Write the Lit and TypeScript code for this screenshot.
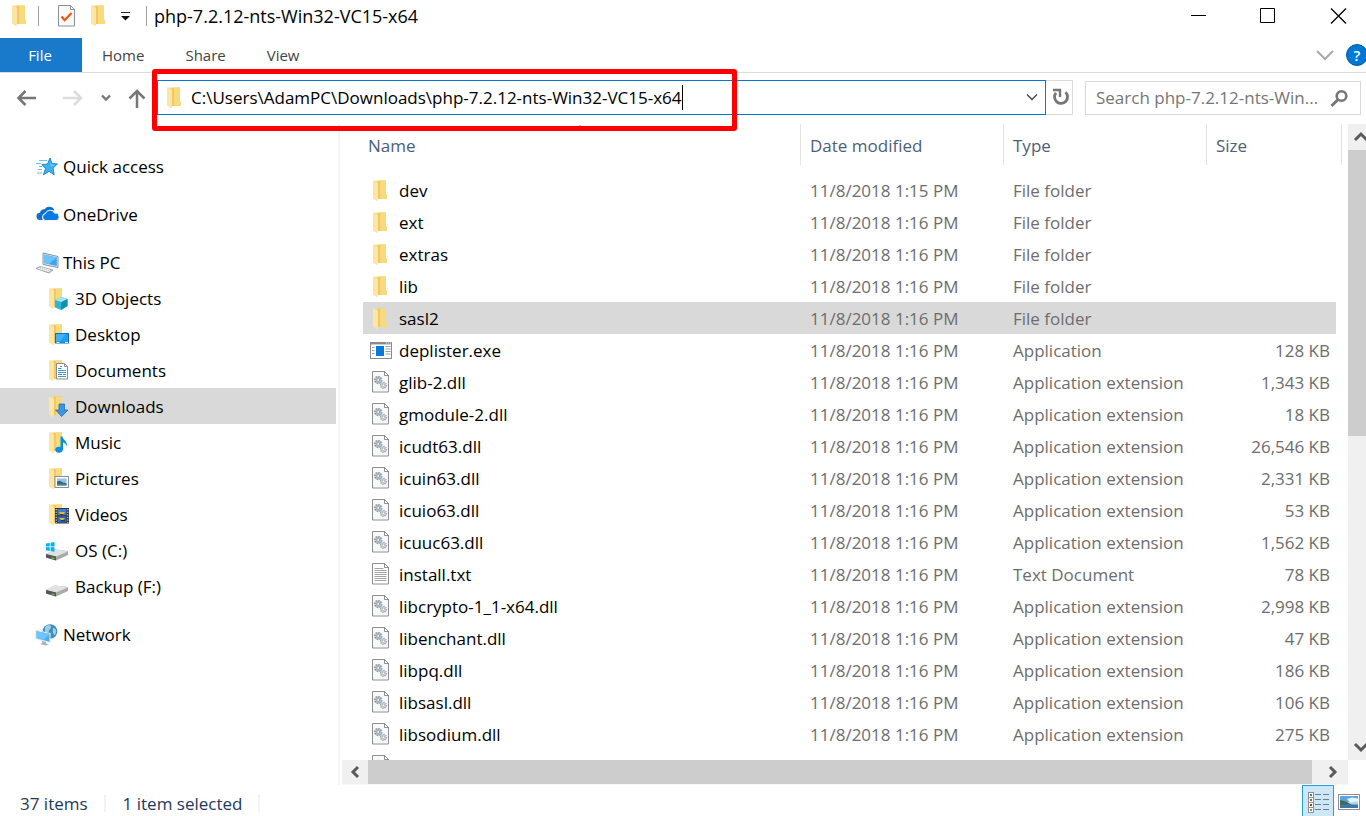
import { LitElement, html, svg, css, nothing } from "lit";
import { customElement, property, state } from "lit/decorators.js";
import { classMap } from "lit/directives/class-map.js";

const folderShape = svg`
  <path d="M5 0.5h9v14l1 .6V19H6z" fill="#f0c964"/>
  <path d="M8 0.5h6v14l1 .6V19H8z" fill="#f8da7e"/>
  <path d="M1 0.5h4.500v14.800L5.600 21 1 18.200z" fill="#f9dd8c"/>
  <path d="M1 0.5L6 3.200V16.500L5.200 21.200 1 18.600z" fill="#fde6a4"/>`;

const glyphs: Record<string, unknown> = {
  folder: svg`<g transform="translate(2 0)">${folderShape}</g>`,
  exe: svg`
    <rect x="0.5" y="2.5" width="21" height="16" fill="#fff" stroke="#858b90"/>
    <rect x="0" y="2" width="22" height="2.4" fill="#858b90"/>
    <path d="M16 3h1M18 3h1M20 3h1" stroke="#fff"/>
    <rect x="6" y="6" width="8" height="10" fill="#0a78d7"/>
    <path d="M2 7.5h2.5M2 10.5h2.5M2 13.5h2.5M15.500 6.500h5M15.500 9h5M15.500 11.500h5M15.500 14h5" stroke="#9a9a9a"/>`,
  dll: svg`
    <g transform="translate(0 -1)">
    <path d="M2.5 0.5h12l4 4v16.5h-16z" fill="#f8f9fa" stroke="#8f8f8f"/>
    <path d="M14.5 0.5v4h4z" fill="#fff" stroke="#8f8f8f"/>
    <circle cx="8.2" cy="9" r="3.4" fill="#c3ccd3" stroke="#93a0ab" stroke-width="1.8" stroke-dasharray="1.6 1"/>
    <circle cx="8.2" cy="9" r="1.5" fill="#f8f9fa" stroke="#7d8b97" stroke-width=".8"/>
    <circle cx="13.5" cy="14.3" r="2.9" fill="#d5dbe0" stroke="#9aa6b0" stroke-width="1.4" stroke-dasharray="1.3 .9"/>
    <circle cx="13.5" cy="14.3" r="1.2" fill="#fff" stroke="#93a0ab" stroke-width=".7"/>
    </g>`,
  txt: svg`
    <g transform="translate(0 -1)">
    <path d="M2.5 0.5h12l4 4v16.5h-16z" fill="#fff" stroke="#8f8f8f"/>
    <path d="M14.5 0.5v4h4z" fill="#fff" stroke="#8f8f8f"/>
    <path d="M4.5 5.5h9M4.5 7.5h12M4.5 9.5h12M4.5 11.5h12M4.5 13.5h12M4.5 15.5h12M4.5 17.5h12" stroke="#a3a3a3"/>
    </g>`,
  check: svg`
    <path d="M2.5 0.5h12l4 4v16.5h-16z" fill="#f9f9f9" stroke="#8f8f8f"/>
    <path d="M14.5 0.5v4h4z" fill="#fff" stroke="#8f8f8f"/>
    <path d="M5.5 11.5l3.2 3.7L15.5 8" fill="none" stroke="#e8590c" stroke-width="2.2"/>`,
  star: svg`
    <path d="M14 2l2 5.500 5.500.4-4.400 4.200 1 6.700-5-3.500-5.600 3.500 2-6.300-3.500-4 5.500-.5z" fill="#3fb0f0" stroke="#1382c8" stroke-width=".9"/>
    <path d="M13.500 4.500l1.500 4 4 .5-3.800 1.200z" fill="#8bd4fb"/>
    <path d="M3 4.500h8M0 7.500h5M3 10.500h3M2 13.500h4M1 17h5" stroke="#74bfee" stroke-width="1.1"/>`,
  cloud: svg`
    <g transform="translate(1 -1)">
    <path d="M5.8 17H3.2A3.6 3.6 0 0 1 3 9.8 4.4 4.4 0 0 1 7.600 6.200 5.600 5.600 0 0 1 17.500 7.400 6 6 0 0 0 12 9.500 5.400 5.400 0 0 0 5.800 17z" fill="#0f6fc9"/>
    <path d="M8.600 17.500a3.500 3.500 0 0 1-.2-6.900 5 5 0 0 1 9.300-.4 3.700 3.700 0 0 1 1.300 7.300z" fill="#0a7ae0" stroke="#fff" stroke-width=".9"/>
    </g>`,
  pc: svg`
    <path d="M7 1l15 3.500v11L7 12.500z" fill="#e4e8eb" stroke="#7f8a92" stroke-width=".9"/>
    <path d="M8.300 2.600l12.500 2.900v8.500L8.300 11.300z" fill="#3ca5ee"/>
    <path d="M8.300 2.600l12.500 2.900-8 6.600-4.500-.8z" fill="#70c3f8"/>
    <path d="M0 16.500l4-2 13 3.500-4 3z" fill="#d6d9dc" stroke="#8e969c" stroke-width=".8"/>
    <path d="M2.500 16.500l10 2.700M5 15.500l9 2.500" stroke="#fff" stroke-width=".8" stroke-dasharray="1.400 .8"/>`,
  cube: svg`${folderShape}
    <path d="M7 12l6.500-3 6 2v7l-6.500 4L7 19.500z" fill="#2fb4d4"/>
    <path d="M7 12l6.500-3 6 2-6 3z" fill="#a2e6f2"/>
    <path d="M13.500 14l6-3v7l-6.500 4z" fill="#128fb0"/>`,
  desktop: svg`${folderShape}
    <rect x="7.500" y="9.500" width="13" height="9.500" fill="#1c9ff4" stroke="#0b6fb8"/>
    <path d="M8 10h10l-6 7H8z" fill="#41b3fb"/>
    <path d="M8.500 18.500h3M17 18.500h3" stroke="#d8f0ff"/>`,
  document: svg`${folderShape}
    <path d="M8.500 3.500h8l3 3v12.500h-11z" fill="#fff" stroke="#8c8c8c"/>
    <path d="M16.500 3.500v3h3" fill="none" stroke="#8c8c8c"/>
    <path d="M10 8.500h3.500M10 10.500h8M10 12.500h8" stroke="#3d9bdd"/>
    <path d="M10 14.500h4M10 16.500h8M15 14.500h3M12 6.500h2" stroke="#5b8fb5"/>`,
  download: svg`${folderShape}
    <path d="M11 8h5.500v6H20l-6.300 6.500L7.500 14H11z" fill="#3d94e0" stroke="#1e6fb9" stroke-width=".8"/>`,
  music: svg`${folderShape}
    <ellipse cx="11" cy="17.800" rx="3.700" ry="3" fill="#0a8fe6"/>
    <path d="M12.500 18V4.500h2c.4 3.500 5.200 4.500 4.500 10.500-.7-3-2.300-4-4-4.400v7.400z" fill="#0a8fe6"/>`,
  picture: svg`${folderShape}
    <rect x="7" y="8.500" width="13.500" height="11" fill="#fff" stroke="#8f8f8f"/>
    <rect x="9" y="10.500" width="9.500" height="7" fill="#8ec3ee"/>
    <path d="M9 13.500l3-.8 3.500 2 3 .3v2.500H9z" fill="#33688f"/>
    <path d="M9 16.500h9.500v1H9z" fill="#6fa878"/>`,
  video: svg`${folderShape}
    <rect x="7" y="4" width="14" height="15.500" fill="#333"/>
    <rect x="9.500" y="5" width="9" height="6.300" fill="#3c7bd6"/>
    <rect x="9.500" y="12.300" width="9" height="6.300" fill="#2f66c4"/>
    <path d="M11 8h6l-1 2h-4zM11 14h6l-2 2h-2z" fill="#e8b92e"/>
    <path d="M12 10h3v1h-3zM13 16h4v1.500h-4z" fill="#3a3f2a"/>
    <path d="M8.200 5v14M19.800 5v14" stroke="#e6e6e6" stroke-dasharray="1.300 1.300"/>`,
  osdrive: svg`
    <path d="M-2 14l9-4.500L20 11v4L8 20.500l-10-3z" fill="#a9a9a9"/>
    <path d="M-2 14l9-5L20 11.500 8 16.500z" fill="#e2e2e2"/>
    <path d="M-2 14l10 2.500v4l-10-3z" fill="#555"/>
    <path d="M3.500 17.800l3 .8" stroke="#4fd04a" stroke-width="1.300"/>
    <path d="M-2 3.500l3.800-.6v3.600H-2zM2.600 2.800L6.500 2v4.500H2.600zM-2 7.300h3.800v3.600l-3.800-.6zM2.600 7.300h3.900v4.400l-3.900-.7z" fill="#00b3f0"/>`,
  drive: svg`
    <path d="M-2 14l9-4.500L20 11v4L8 20.500l-10-3z" fill="#a9a9a9"/>
    <path d="M-2 14l9-5L20 11.500 8 16.500z" fill="#e2e2e2"/>
    <path d="M-2 14l10 2.500v4l-10-3z" fill="#555"/>
    <path d="M3.500 17.800l3 .8" stroke="#4fd04a" stroke-width="1.300"/>`,
  network: svg`
    <circle cx="14" cy="7.500" r="7.300" fill="#3d8fc0"/>
    <path d="M9 3c3-3 6-2.500 6 0s-2 2-2 4-4 1-4 3M17 4c3 0 4 3 2.500 6S16 8 17 4z" fill="#9fcde2"/>
    <path d="M0 6.500l14 3v9L0 14.500z" fill="#45b0f4" stroke="#dfe7ec" stroke-width="1.200"/>
    <path d="M.6 7.200l12.800 2.800-6 6-6.800-2z" fill="#6fc5fa"/>
    <path d="M6 17l4 1v1.500l3 .8-3 1.200-6-1.600 2-.6z" fill="#aab3b9"/>`,
  details: svg`
    <g transform="translate(1 1)">
    <rect x="0.500" y="0.500" width="5" height="20" fill="#fff" stroke="#8f8f8f"/>
    <path d="M0 5.500h6M0 10.500h6M0 15.500h6" stroke="#8f8f8f"/>
    <path d="M2 3h2" stroke="#2d7fc0" stroke-width="2"/><path d="M2 8h2" stroke="#8c6a3c" stroke-width="2"/>
    <path d="M2 13h2" stroke="#c8281e" stroke-width="2"/><path d="M2 18h2" stroke="#6fa84c" stroke-width="2"/>
    <path d="M7 2.500h6M15 2.500h6M7 7.500h6M15 7.500h6M7 12.500h6M15 12.500h6M7 17.500h6M15 17.500h6" stroke="#6f7f88"/>
    </g>`,
  thumbs: svg`
    <rect x="0.500" y="3.500" width="21" height="15" fill="#fff" stroke="#8f8f8f"/>
    <rect x="2" y="5" width="18" height="12" fill="#a9d3f5"/>
    <path d="M2 5h18v4l-9 2H2z" fill="#5da3e6"/>
    <path d="M9 8l5-1.500 6 1v3l-8 1z" fill="#e6f2fc"/>
    <path d="M2 9l6 1.500 6 3.500H2z" fill="#3d6b4f"/>
    <path d="M2 13.500h18V17H2z" fill="#3f78a8"/>`,
};

@customElement("shell-icon")
class ShellIcon extends LitElement {
  @property() name = "";
  static styles = css`
    :host { display: block; flex: none; width: 22px; height: 22px; }
    svg { display: block; width: 22px; height: 22px; overflow: visible; }
  `;
  render() {
    return html`<svg viewBox="0 0 22 22" aria-hidden="true">${glyphs[this.name]}</svg>`;
  }
}

type Place = { label: string; icon: string; child?: boolean; gap?: boolean };
type Entry = { name: string; icon: string; date: string; type: string; size: string };

const places: Place[] = [
  { label: "Quick access", icon: "star" },
  { label: "OneDrive", icon: "cloud", gap: true },
  { label: "This PC", icon: "pc", gap: true },
  { label: "3D Objects", icon: "cube", child: true },
  { label: "Desktop", icon: "desktop", child: true },
  { label: "Documents", icon: "document", child: true },
  { label: "Downloads", icon: "download", child: true },
  { label: "Music", icon: "music", child: true },
  { label: "Pictures", icon: "picture", child: true },
  { label: "Videos", icon: "video", child: true },
  { label: "OS (C:)", icon: "osdrive", child: true },
  { label: "Backup (F:)", icon: "drive", child: true },
  { label: "Network", icon: "network", gap: true },
];

const afternoon = "11/8/2018 1:16 PM";
const dir = (name: string, date = afternoon): Entry => ({ name, icon: "folder", date, type: "File folder", size: "" });
const dll = (name: string, size: string): Entry => ({ name, icon: "dll", date: afternoon, type: "Application extension", size });

const entries: Entry[] = [
  dir("dev", "11/8/2018 1:15 PM"),
  dir("ext"),
  dir("extras"),
  dir("lib"),
  dir("sasl2"),
  { name: "deplister.exe", icon: "exe", date: afternoon, type: "Application", size: "128 KB" },
  dll("glib-2.dll", "1,343 KB"),
  dll("gmodule-2.dll", "18 KB"),
  dll("icudt63.dll", "26,546 KB"),
  dll("icuin63.dll", "2,331 KB"),
  dll("icuio63.dll", "53 KB"),
  dll("icuuc63.dll", "1,562 KB"),
  { name: "install.txt", icon: "txt", date: afternoon, type: "Text Document", size: "78 KB" },
  dll("libcrypto-1_1-x64.dll", "2,998 KB"),
  dll("libenchant.dll", "47 KB"),
  dll("libpq.dll", "186 KB"),
  dll("libsasl.dll", "106 KB"),
  dll("libsodium.dll", "275 KB"),
  dll("", ""),
];

const chevron = (d: string) => html`
  <svg width="12" height="12" viewBox="0 0 12 12" aria-hidden="true">
    <path d=${d} fill="none" stroke="#5a5a5a" stroke-width="3" />
  </svg>`;

@customElement("app-root")
class AppRoot extends LitElement {
  @state() private place = "Downloads";
  @state() private selected = "sasl2";

  static styles = css`
    :host {
      display: flex; flex-direction: column; height: 100vh; overflow: hidden;
      background: #fff; color: #000;
      font: 17px/24px "Open Sans", "Noto Sans", sans-serif;
    }
    *, *::before { box-sizing: border-box; }
    button { border: 0; padding: 0; margin: 0; background: none; font: inherit; color: inherit; }
    input { border: 0; padding: 0; margin: 0; background: none; font: inherit; color: inherit; outline: 0; }
    a { color: inherit; text-decoration: none; }
    svg { display: block; flex: none; overflow: visible; }

    .title { display: flex; align-items: center; height: 38px; padding: 0 20px 6px 9px; flex: none; }
    .title h1 { margin: 0 0 0 7px; font: inherit; font-size: 18px; flex: 1; }
    .rule { width: 1px; height: 20px; background: #a0a0a0; }
    .quick { display: flex; align-items: center; gap: 10px; margin: 0 16px 0 17px; }
    .title .rule:first-of-type { margin-left: 7px; }
    .controls { display: flex; gap: 54px; }

    .tabs { display: flex; align-items: center; height: 35px; border-bottom: 1px solid #dadbdc; font-size: 15px; color: #444; flex: none; }
    .tab { height: 34px; padding: 0 20px; }
    .tab + .tab + .tab { margin-left: 1px; }
    .file { width: 82px; background: #1979ca; color: #fff; padding: 0 2px 0 0; }
    .ribbon-end { display: flex; align-items: center; gap: 12px; margin: 0 -2px 0 auto; }
    .help { width: 22px; height: 22px; border-radius: 50%; background: #0078d7; border: 1px solid #005a9e; color: #fff; line-height: 20px; font-weight: 600; }

    .bar { display: flex; align-items: center; height: 51px; padding: 0 5px 2px 16px; flex: none; }
    .arrows { display: flex; align-items: center; width: 141px; flex: none; }
    .arrows button:nth-child(2) { margin-left: 26px; }
    .arrows button:nth-child(3) { margin-left: 20px; }
    .arrows button:nth-child(4) { margin-left: 18px; }
    .address { position: relative; display: flex; align-items: center; flex: 1; height: 35px; border: 1px solid #0078d7; padding: 0 7px; }
    .address shell-icon { margin-left: -1px; }
    .address input { field-sizing: content; margin-left: 5px; }
    .caret { width: 1px; height: 25px; background: #000; margin-right: auto; }
    .highlight { position: absolute; left: -6px; top: -12px; width: 585px; height: 62px; border: 5px solid #f00; border-radius: 3px; pointer-events: none; z-index: 2; }
    .refresh { display: grid; place-items: center; width: 27px; height: 35px; padding-left: 3px; border: 1px solid #d9d9d9; border-left: 0; }
    .search { display: flex; align-items: center; width: 276px; height: 34px; margin: 1px 0 0 12px; padding: 0 12px 0 10px; border: 1px solid #d9d9d9; }
    .search input { flex: 1; min-width: 0; }
    .search input::placeholder { color: #767676; opacity: 1; }

    .body { display: flex; flex: 1; min-height: 0; }
    nav { width: 340px; flex: none; padding-right: 2px; border-right: 2px solid #f5f5f5; }
    nav ul { list-style: none; margin: 0; padding: 24px 0 0; }
    .gap { margin-top: 12px; }
    .place { display: flex; align-items: center; gap: 5px; height: 36px; padding: 1px 0 0 36px; }
    .child { padding-left: 48px; }
    .place.current { background: #d9d9d9; }

    .files { display: grid; flex: 1; min-width: 0; margin-left: 2px; grid-template: minmax(0, 1fr) 25px / minmax(0, 1fr) 18px; }
    .list { overflow: hidden; padding-left: 21px; }
    table { width: 100%; border-spacing: 0; table-layout: fixed; padding-right: 6px; }
    .c-date, .c-type { width: 203px; }
    .c-size { width: 135px; }
    th { height: 41px; padding: 2px 0 0 9px; border-right: 1px solid #e2e2e2; text-align: left; font-weight: normal; color: #4c607a; }
    th:first-child { position: relative; padding-left: 5px; }
    .sort { position: absolute; left: 50%; top: 1px; margin-left: -6px; }
    tbody::before { content: ""; display: block; height: 9px; }
    td { height: 32px; padding: 2px 0 0 9px; color: #6d6d6d; white-space: nowrap; }
    td:first-child { padding-left: 7px; color: #000; }
    td:last-child { text-align: right; padding-right: 6px; border-right: 6px solid transparent; background-clip: padding-box; }
    tr.current td { background-color: #d9d9d9; }
    .name { display: flex; align-items: center; gap: 7px; }

    .vbar { display: flex; flex-direction: column; background: #f0f0f0; overflow: hidden; }
    .vbar button { display: grid; place-items: center; width: 26px; height: 26px; flex: none; }
    .track { flex: 1; }
    .vthumb { height: 49%; background: #cdcdcd; }
    .hbar { display: flex; background: #f0f0f0; border-bottom: 1px solid #f8f8f8; }
    .hbar button { display: grid; place-items: center; width: 26px; flex: none; }
    .hbar .last { width: 36px; padding-left: 6px; }
    .hthumb { height: 24px; background: #cdcdcd; }

    footer { display: flex; align-items: center; height: 31px; flex: none; color: #1e395b; padding: 6px 6px 0 20px; }
    .mark { width: 2px; height: 17px; background: #f3f3f3; margin: 0 17px 0 16px; }
    .views { display: flex; gap: 4px; margin: -4px 0 0 auto; }
    .views button { display: grid; place-items: center; height: 33px; }
    .views .on { width: 32px; background: #cce8f6; border: 1px solid #26a0da; }
  `;

  render() {
    return html`
      <header class="title">
        <shell-icon name="folder"></shell-icon>
        <span class="rule"></span>
        <div class="quick">
          <shell-icon name="check"></shell-icon>
          <shell-icon name="folder"></shell-icon>
          <button aria-label="Customize toolbar">
            <svg width="10" height="8" viewBox="0 0 10 8"><path d="M1 .5h9" stroke="#222" /><path d="M1 4h9L5.500 8.500z" fill="#111" /></svg>
          </button>
        </div>
        <span class="rule"></span>
        <h1>php-7.2.12-nts-Win32-VC15-x64</h1>
        <div class="controls">
          <button aria-label="Minimize"><svg width="16" height="16"><path d="M1 7.500h15" stroke="#000" /></svg></button>
          <button aria-label="Maximize"><svg width="16" height="16"><path d="M.5.5h14v14H.5z" fill="none" stroke="#000" /></svg></button>
          <button aria-label="Close"><svg width="16" height="16"><path d="M1 .5l15 15M16 .5l-15 15" stroke="#000" stroke-width="1.300" /></svg></button>
        </div>
      </header>

      <div class="tabs">
        <button class="tab file">File</button>
        <button class="tab">Home</button>
        <button class="tab">Share</button>
        <button class="tab">View</button>
        <div class="ribbon-end">
          <button aria-label="Expand ribbon"><svg width="18" height="10"><path d="M1 1l8 8 8-8" fill="none" stroke="#a9a9a9" stroke-width="2" /></svg></button>
          <button class="help" aria-label="Help">?</button>
        </div>
      </div>

      <div class="bar">
        <div class="arrows">
          <button aria-label="Back"><svg width="20" height="18"><path d="M20 9H2M9.500 2L2.500 9l7 7" fill="none" stroke="#767676" stroke-width="2.500" /></svg></button>
          <button aria-label="Forward"><svg width="20" height="18"><path d="M1 9h18M12 2l7 7-7 7" fill="none" stroke="#dcdcdc" stroke-width="2.500" /></svg></button>
          <button aria-label="Recent"><svg width="8" height="6"><path d="M0 .5l4 4 4-4" fill="none" stroke="#767676" stroke-width="2.400" /></svg></button>
          <button aria-label="Up"><svg width="18" height="18"><path d="M9 19V2M1.500 9.500L9 2 16.500 9.500" fill="none" stroke="#767676" stroke-width="2.500" /></svg></button>
        </div>
        <div class="address">
          <shell-icon name="folder"></shell-icon>
          <input aria-label="Address" spellcheck="false" value="C:\\Users\\AdamPC\\Downloads\\php-7.2.12-nts-Win32-VC15-x64" />
          <span class="caret"></span>
          <button aria-label="Previous locations"><svg width="12" height="7"><path d="M1 .5l5 5 5-5" fill="none" stroke="#444" stroke-width="1.300" /></svg></button>
          <div class="highlight"></div>
        </div>
        <button class="refresh" aria-label="Refresh">
          <svg width="16" height="17"><path d="M12.500 3.200A6.500 6.500 0 1 1 3 3.800" fill="none" stroke="#767676" stroke-width="2.800" /><path d="M0 1h7v7" fill="none" stroke="#767676" stroke-width="2.400" /></svg>
        </button>
        <div class="search">
          <input aria-label="Search" placeholder="Search php-7.2.12-nts-Win..." />
          <svg width="18" height="17"><circle cx="11.500" cy="6" r="4.800" fill="none" stroke="#767676" stroke-width="2.600" /><path d="M8 9.500L1.500 16" stroke="#767676" stroke-width="3" /></svg>
        </div>
      </div>

      <main class="body">
        <nav>
          <ul>
            ${places.map((p) => html`
              <li class=${classMap({ gap: !!p.gap })}>
                <a href="#" class=${classMap({ place: true, child: !!p.child, current: p.label === this.place })}
                  @click=${(e: Event) => { e.preventDefault(); this.place = p.label; }}>
                  <shell-icon name=${p.icon}></shell-icon>${p.label}
                </a>
              </li>`)}
          </ul>
        </nav>
        <section class="files">
          <div class="list">
            <table>
              <colgroup><col /><col class="c-date" /><col class="c-type" /><col class="c-size" /></colgroup>
              <thead>
                <tr>
                  <th>Name<svg class="sort" width="8" height="5"><path d="M0 4.500l4-4 4 4" fill="none" stroke="#777" /></svg></th>
                  <th>Date modified</th><th>Type</th><th>Size</th>
                </tr>
              </thead>
              <tbody>
                ${entries.map((f) => html`
                  <tr class=${f.name === this.selected ? "current" : nothing} @click=${() => (this.selected = f.name)}>
                    <td><div class="name"><shell-icon name=${f.icon}></shell-icon>${f.name}</div></td>
                    <td>${f.name ? f.date : nothing}</td><td>${f.name ? f.type : nothing}</td><td>${f.size}</td>
                  </tr>`)}
              </tbody>
            </table>
          </div>
          <div class="vbar">
            <button aria-label="Scroll up">${chevron("M0 9l6-6 6 6")}</button>
            <div class="track"><div class="vthumb"></div></div>
            <button aria-label="Scroll down">${chevron("M0 3l6 6 6-6")}</button>
          </div>
          <div class="hbar">
            <button aria-label="Scroll left">${chevron("M9 1L4 6l5 5")}</button>
            <div class="track"><div class="hthumb"></div></div>
            <button class="last" aria-label="Scroll right">${chevron("M3 1l5 5-5 5")}</button>
          </div>
        </section>
      </main>

      <footer>
        <span>37 items</span><span class="mark"></span>
        <span>1 item selected</span><span class="mark"></span>
        <div class="views">
          <button class="on" aria-label="Details view"><shell-icon name="details"></shell-icon></button>
          <button aria-label="Large icons view"><shell-icon name="thumbs"></shell-icon></button>
        </div>
      </footer>
    `;
  }
}
